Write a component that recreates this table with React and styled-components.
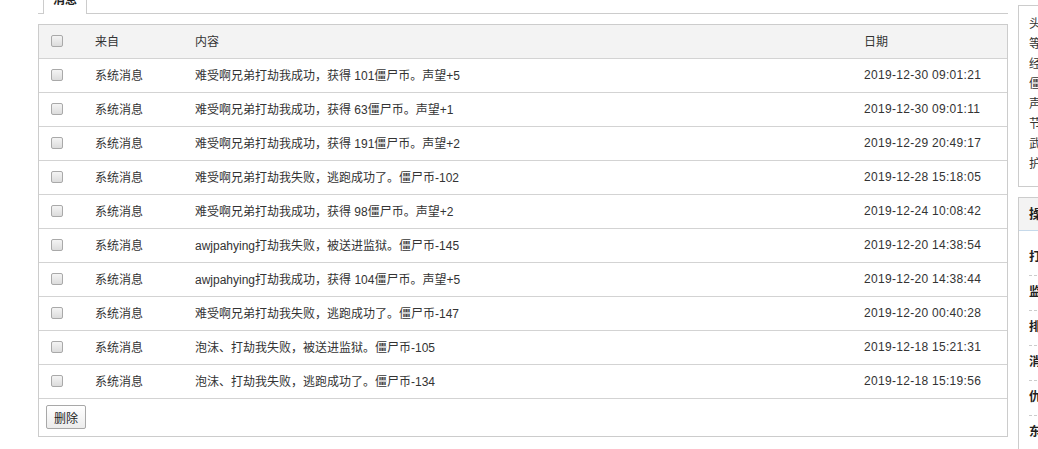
import React from "react";
import styled, { createGlobalStyle } from "styled-components";

const Global = createGlobalStyle`
  html, body { margin: 0; padding: 0; background: #fff; overflow: hidden; }
  body { font-family: "Liberation Sans", "Noto Sans CJK SC", sans-serif; font-size: 12px; color: #333; }
`;

const Page = styled.div`
  display: flex;
  align-items: flex-start;
  margin-top: -13px;
  width: 1300px;
`;

const Main = styled.div`
  margin-left: 38px;
  width: 970px;
  flex: none;
`;

const TabBar = styled.div`
  display: flex;
  border-bottom: 1px solid #ccc;
  padding-left: 5px;
  height: 26px;
`;

const Tab = styled.div`
  width: 44px;
  border: 1px solid #ccc;
  border-bottom: none;
  background: #fff;
  font-weight: bold;
  color: #222;
  text-align: center;
  line-height: 24px;
  margin-bottom: -1px;
  box-sizing: border-box;
  height: 27px;
`;

const Table = styled.div`
  margin-top: 10px;
  border: 1px solid #ccc;
`;

const cols = "56px 100px 669px 1fr";

const Row = styled.div`
  display: grid;
  grid-template-columns: ${cols};
  height: 33px;
  box-sizing: border-box;
  height: 34px;
  padding-bottom: 2px;
  align-items: center;
  border-bottom: 1px solid #d3d3d3;
  background: ${(p) => (p.$head ? "#f3f3f3" : "#fff")};
`;

const Cell = styled.div`
  white-space: nowrap;
  padding-left: ${(p) => p.$pad || 0}px;
  letter-spacing: ${(p) => (p.$date ? "0.3px" : "0")};
  display: flex;
  align-items: center;
`;

const Check = styled.input.attrs({ type: "checkbox" })`
  appearance: none;
  margin: 1px 0 0;
  width: 12px;
  height: 12px;
  border: 1px solid #a9a9a9;
  border-radius: 2px;
  background: linear-gradient(#f4f4f4, #dcdcdc);
  box-sizing: border-box;
`;

const Footer = styled.div`
  padding: 6px 7px 7px;
`;

const Button = styled.button`
  width: 40px;
  height: 24px;
  padding: 0;
  border: 1px solid #a8a8a8;
  border-radius: 2px;
  background: linear-gradient(#ffffff, #ececec);
  font-family: "Noto Sans CJK SC", sans-serif;
  font-size: 12px;
  color: #222;
`;

const Side = styled.div`
  margin-left: 10px;
  margin-top: 18px;
  width: 200px;
  flex: none;
`;

const Panel = styled.div`
  border: 1px solid #ccc;
  margin-bottom: 10px;
`;

const InfoList = styled.div`
  padding: 8px 10px 12px;
  line-height: 20px;
  color: #333;
`;

const PanelHead = styled.div`
  height: 32px;
  line-height: 31px;
  background: #f3f3f3;
  border-bottom: 1px solid #c6d9ea;
  padding-left: 10px;
  font-weight: bold;
  font-size: 13px;
  color: #222;
`;

const NavList = styled.div`
  padding: 10px 10px 0;
`;

const NavItem = styled.div`
  padding: 7px 0 9px;
  line-height: 18px;
  border-bottom: 1px dashed #ccc;
  font-weight: bold;
  color: #222;
`;

const rows = [
  ["难受啊兄弟打劫我成功，获得 101僵尸币。声望+5", "2019-12-30 09:01:21"],
  ["难受啊兄弟打劫我成功，获得 63僵尸币。声望+1", "2019-12-30 09:01:11"],
  ["难受啊兄弟打劫我成功，获得 191僵尸币。声望+2", "2019-12-29 20:49:17"],
  ["难受啊兄弟打劫我失败，逃跑成功了。僵尸币-102", "2019-12-28 15:18:05"],
  ["难受啊兄弟打劫我成功，获得 98僵尸币。声望+2", "2019-12-24 10:08:42"],
  ["awjpahying打劫我失败，被送进监狱。僵尸币-145", "2019-12-20 14:38:54"],
  ["awjpahying打劫我成功，获得 104僵尸币。声望+5", "2019-12-20 14:38:44"],
  ["难受啊兄弟打劫我失败，逃跑成功了。僵尸币-147", "2019-12-20 00:40:28"],
  ["泡沫、打劫我失败，被送进监狱。僵尸币-105", "2019-12-18 15:21:31"],
  ["泡沫、打劫我失败，逃跑成功了。僵尸币-134", "2019-12-18 15:19:56"],
];

const info = ["头衔：", "等级：", "经验：", "僵尸币：", "声望：", "节操：", "武器：", "护甲："];
const nav = ["打劫", "监狱", "排行榜", "消息", "仇人", "东西"];

export default function App() {
  return (
    <>
      <Global />
      <Page>
        <Main>
          <TabBar>
            <Tab>消息</Tab>
          </TabBar>
          <Table>
            <Row $head>
              <Cell $pad={12}><Check /></Cell>
              <Cell>来自</Cell>
              <Cell>内容</Cell>
              <Cell>日期</Cell>
            </Row>
            {rows.map(([msg, date], i) => (
              <Row key={i}>
                <Cell $pad={12}><Check /></Cell>
                <Cell>系统消息</Cell>
                <Cell>{msg}</Cell>
                <Cell $date>{date}</Cell>
              </Row>
            ))}
            <Footer>
              <Button>删除</Button>
            </Footer>
          </Table>
        </Main>
        <Side>
          <Panel>
            <InfoList>
              {info.map((t) => (
                <div key={t}>{t}</div>
              ))}
            </InfoList>
          </Panel>
          <Panel>
            <PanelHead>操作</PanelHead>
            <NavList>
              {nav.map((t) => (
                <NavItem key={t}>{t}</NavItem>
              ))}
            </NavList>
          </Panel>
        </Side>
      </Page>
    </>
  );
}
